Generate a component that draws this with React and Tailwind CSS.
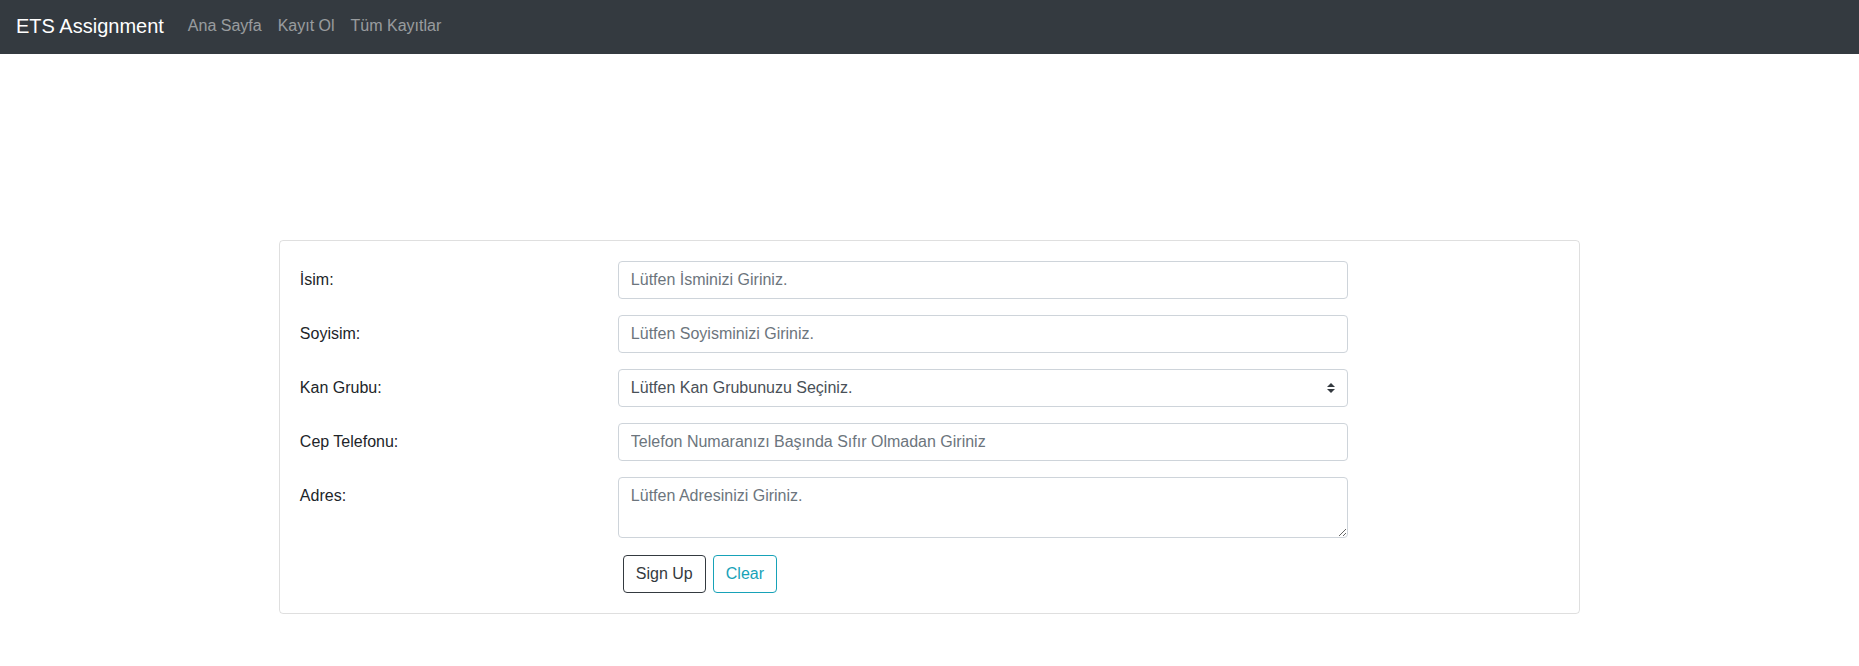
import React from 'react';

const FormRow = ({ label, children }) => (
  <div className="flex mb-4">
    <label className="w-[318px] shrink-0 pt-[7px] leading-6 text-base">{label}</label>
    {children}
  </div>
);

const inputCls =
  'w-[730px] h-[38px] border border-[#ced4da] rounded px-3 text-base leading-6 text-[#495057] bg-white placeholder:text-[#6c757d] outline-none';

const App = () => {
  return (
    <div className="min-h-screen bg-white text-[#212529] font-['Liberation_Sans',Arial,sans-serif]">
      <nav className="h-[54px] bg-[#343a40] flex items-center px-4 pb-[2px]">
        <a className="text-[20px] text-white mr-4 leading-[30px]">ETS Assignment</a>
        <div className="flex">
          <a className="px-2 text-base text-white/50">Ana Sayfa</a>
          <a className="px-2 text-base text-white/50">Kayıt Ol</a>
          <a className="px-2 text-base text-white/50">Tüm Kayıtlar</a>
        </div>
      </nav>

      <div className="mx-auto mt-[186px] w-[70%] border border-black/[0.125] rounded p-5">
        <FormRow label="İsim:">
          <input className={inputCls} placeholder="Lütfen İsminizi Giriniz." />
        </FormRow>
        <FormRow label="Soyisim:">
          <input className={inputCls} placeholder="Lütfen Soyisminizi Giriniz." />
        </FormRow>
        <FormRow label="Kan Grubu:">
          <div className="relative w-[730px]">
            <select className={inputCls + ' appearance-none pr-8'} defaultValue="">
              <option value="">Lütfen Kan Grubunuzu Seçiniz.</option>
              <option>A Rh+</option>
              <option>A Rh-</option>
              <option>B Rh+</option>
              <option>B Rh-</option>
              <option>AB Rh+</option>
              <option>AB Rh-</option>
              <option>0 Rh+</option>
              <option>0 Rh-</option>
            </select>
            <svg
              className="absolute right-[13px] top-[14px] pointer-events-none"
              width="8"
              height="10"
              viewBox="0 0 4 5"
            >
              <path fill="#343a40" d="M2 0L0 2h4zm0 5L0 3h4z" />
            </svg>
          </div>
        </FormRow>
        <FormRow label="Cep Telefonu:">
          <input className={inputCls} placeholder="Telefon Numaranızı Başında Sıfır Olmadan Giriniz" />
        </FormRow>
        <FormRow label="Adres:">
          <textarea
            className={inputCls + ' h-[61px] py-[6px] resize-y'}
            placeholder="Lütfen Adresinizi Giriniz."
          />
        </FormRow>
        <div className="flex pl-[323px] pt-px gap-[7px]">
          <button className="h-[38px] px-3 border border-[#343a40] rounded text-base text-[#343a40] bg-white">
            Sign Up
          </button>
          <button className="h-[38px] px-3 border border-[#17a2b8] rounded text-base text-[#17a2b8] bg-white">
            Clear
          </button>
        </div>
      </div>
    </div>
  );
};

export default App;
